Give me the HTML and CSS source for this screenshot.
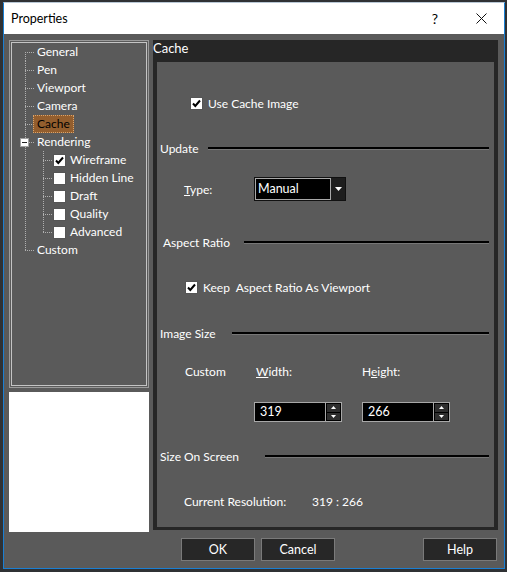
FILE: index.html
```html
<!DOCTYPE html>
<html lang="en">
<head>
  <meta charset="UTF-8" />
  <title>Properties</title>
  <link rel="stylesheet" href="styles.css">
</head>
<body>

  <div class="window">
    <div class="titlebar">
      <span class="title">Properties</span>
      <span class="tb-btn">?</span>
      <span class="tb-btn">
        <svg width="11" height="11" viewBox="0 0 11 11"><path d="M0.5 0.5 L10.5 10.5 M10.5 0.5 L0.5 10.5" stroke="#111" stroke-width="1"/></svg>
      </span>
    </div>

    <div class="main">
      <div class="side">
        <div class="tree-box">
          <ul class="tree">
            <li class="node"><span class="g g-start"></span><span class="label">General</span></li>
            <li class="node"><span class="g g-tee"></span><span class="label">Pen</span></li>
            <li class="node"><span class="g g-tee"></span><span class="label">Viewport</span></li>
            <li class="node"><span class="g g-tee"></span><span class="label">Camera</span></li>
            <li class="node"><span class="g g-tee"></span><span class="label selected">Cache</span></li>
            <li class="node"><span class="g g-tee"><span class="minus"></span></span><span class="label">Rendering</span></li>
            <li class="node"><span class="g g-pipe"></span><span class="g-sub g-tee"></span><span class="check"><svg width="13" height="13" viewBox="0 0 13 13"><path d="M3 6.5 L5.3 9 L10 3.5" fill="none" stroke="#000" stroke-width="2"/></svg></span><span class="label sub">Wireframe</span></li>
            <li class="node"><span class="g g-pipe"></span><span class="g-sub g-tee"></span><span class="check"></span><span class="label sub">Hidden Line</span></li>
            <li class="node"><span class="g g-pipe"></span><span class="g-sub g-tee"></span><span class="check"></span><span class="label sub">Draft</span></li>
            <li class="node"><span class="g g-pipe"></span><span class="g-sub g-tee"></span><span class="check"></span><span class="label sub">Quality</span></li>
            <li class="node"><span class="g g-pipe"></span><span class="g-sub g-end"></span><span class="check"></span><span class="label sub">Advanced</span></li>
            <li class="node"><span class="g g-end"></span><span class="label">Custom</span></li>
          </ul>
        </div>
        <div class="preview"></div>
      </div>

      <div class="panel">
        <div class="panel-title">Cache</div>
        <div class="panel-body">

          <div class="row opt-cache">
            <span class="check"><svg width="13" height="13" viewBox="0 0 13 13"><path d="M3 6.5 L5.3 9 L10 3.5" fill="none" stroke="#000" stroke-width="2"/></svg></span>
            <span class="opt-text">Use Cache Image</span>
          </div>

          <div class="row hdr gap-21">
            <span class="hdr-label w-update">Update</span><span class="rule"></span>
          </div>

          <div class="row gap-17 type-row">
            <span class="field-label"><u>T</u>ype:</span>
            <div class="combo">
              <span class="combo-text">Manual</span>
              <span class="combo-btn"><svg width="7" height="4" viewBox="0 0 7 4"><path d="M0 0 H7 L3.5 4 Z" fill="#fff"/></svg></span>
            </div>
          </div>

          <div class="row hdr hdr-aspect gap-29">
            <span class="hdr-label w-aspect">Aspect Ratio</span><span class="rule"></span>
          </div>

          <div class="row opt-keep gap-21">
            <span class="check"><svg width="13" height="13" viewBox="0 0 13 13"><path d="M3 6.5 L5.3 9 L10 3.5" fill="none" stroke="#000" stroke-width="2"/></svg></span>
            <span class="opt-text">Keep&nbsp; Aspect Ratio As Viewport</span>
          </div>

          <div class="row hdr gap-22">
            <span class="hdr-label w-size">Image Size</span><span class="rule"></span>
          </div>

          <div class="size-grid">
            <span class="custom">Custom</span>
            <span class="dim-label pad-w"><u>W</u>idth:</span>
            <span class="dim-label">H<u>e</u>ight:</span>
            <span></span>
            <div class="spin">
              <span class="spin-text">319</span>
              <span class="spin-btns">
                <span class="spin-btn"><svg width="5" height="3" viewBox="0 0 5 3"><path d="M0 3 H5 L2.5 0 Z" fill="#fff"/></svg></span>
                <span class="spin-btn"><svg width="5" height="3" viewBox="0 0 5 3"><path d="M0 0 H5 L2.5 3 Z" fill="#fff"/></svg></span>
              </span>
            </div>
            <div class="spin">
              <span class="spin-text">266</span>
              <span class="spin-btns">
                <span class="spin-btn"><svg width="5" height="3" viewBox="0 0 5 3"><path d="M0 3 H5 L2.5 0 Z" fill="#fff"/></svg></span>
                <span class="spin-btn"><svg width="5" height="3" viewBox="0 0 5 3"><path d="M0 0 H5 L2.5 3 Z" fill="#fff"/></svg></span>
              </span>
            </div>
          </div>

          <div class="row hdr gap-22">
            <span class="hdr-label w-screen">Size On Screen</span><span class="rule"></span>
          </div>

          <div class="row res-row gap-21">
            <span class="res-label">Current Resolution:</span>
            <span class="res-value">319 : 266</span>
          </div>

        </div>
      </div>
    </div>

    <div class="footer">
      <button class="btn">OK</button>
      <button class="btn">Cancel</button>
      <button class="btn btn-help">Help</button>
    </div>
  </div>

</body>
</html>
```

FILE: styles.css
```css
body {
  margin: 0;
  background: #2f3134;
  font-family: Lato, "Liberation Sans", sans-serif;
  font-size: 12px;
  color: #fff;
}

.window {
  margin: 2px 0 0 3px;
  width: 500px;
  border: 1px solid #1a7fd3;
  border-top-color: #b9c8d6;
  background: #5a5a5a;
}

/* title bar */
.titlebar {
  height: 31px;
  background: #fff;
  color: #000;
  display: flex;
  align-items: center;
}

.title {
  flex: 1;
  padding-left: 7px;
  font-size: 12.5px;
}

.tb-btn {
  width: 46px;
  height: 31px;
  display: flex;
  align-items: center;
  justify-content: center;
  font-size: 14px;
}

/* body */
.main {
  display: flex;
  align-items: flex-start;
  gap: 4px;
  padding: 6px 6px 0 5px;
}

.side {
  width: 140px;
  display: flex;
  flex-direction: column;
  gap: 4px;
}

.tree-box {
  height: 348px;
  box-sizing: border-box;
  border: 1px solid #9a9a9a;
  padding: 1px;
}

.tree {
  list-style: none;
  margin: 0;
  padding: 0;
  height: 100%;
  box-sizing: border-box;
  border: 1px solid #c4c4c4;
}

.node {
  display: flex;
  align-items: center;
  height: 18px;
}

.g, .g-sub {
  flex: none;
  width: 22px;
  height: 18px;
  display: flex;
  align-items: center;
  background-repeat: no-repeat;
}

.g-sub {
  width: 19px;
}

.g-start, .g-tee, .g-end, .g-pipe {
  background-image:
    repeating-linear-gradient(to bottom, #b0b0b0 0 1px, transparent 1px 2px),
    repeating-linear-gradient(to right, #b0b0b0 0 1px, transparent 1px 2px);
}

.g-tee { background-size: 1px 18px, 9px 1px; background-position: 13px 0, 13px 9px; }
.g-end { background-size: 1px 10px, 9px 1px; background-position: 13px 0, 13px 9px; }
.g-start { background-size: 1px 9px, 9px 1px; background-position: 13px 9px, 13px 9px; }
.g-pipe { background-size: 1px 18px, 0 0; background-position: 13px 0, 0 0; }

.g-sub.g-tee { background-size: 1px 18px, 10px 1px; background-position: 9px 0, 9px 9px; }
.g-sub.g-end { background-size: 1px 10px, 10px 1px; background-position: 9px 0, 9px 9px; }

.minus {
  width: 9px;
  height: 9px;
  box-sizing: border-box;
  margin-left: 8px;
  border: 1px solid #a0a0a0;
  background: #fff linear-gradient(#222, #222) no-repeat center / 5px 1px;
}

.label {
  padding: 0 3px;
  line-height: 16px;
  border: 1px solid transparent;
  margin-left: -1px;
  white-space: nowrap;
}

.label.selected {
  background: #935e2e;
  border: 1px dotted #d9a46c;
  color: #000;
}

.label.sub {
  margin-left: 0;
  padding-left: 3px;
}

.check {
  flex: none;
  width: 13px;
  height: 13px;
  box-sizing: border-box;
  background: #fff;
  border: 1px solid #555;
  display: flex;
}

.check svg {
  margin: -1px;
}

.preview {
  height: 140px;
  background: #fff;
}

/* right panel */
.panel {
  width: 345px;
  height: 490px;
  background: #262626;
  display: flex;
  flex-direction: column;
}

.panel-title {
  height: 22px;
  line-height: 16px;
  font-size: 13px;
}

.panel-body {
  flex: 1;
  margin: 0 4px 3px;
  background: #5a5a5a;
  padding-top: 29px;
  display: flex;
  flex-direction: column;
}

.row {
  display: flex;
  align-items: center;
  height: 24px;
  flex: none;
}

.gap-17 { margin-top: 17px; }
.gap-21 { margin-top: 21px; }
.gap-22 { margin-top: 22px; }
.gap-29 { margin-top: 29px; }

.opt-cache { padding-left: 33px; }
.opt-keep { padding-left: 28px; }

.opt-text {
  margin-left: 5px;
}

.hdr {
  padding-left: 3px;
  padding-right: 5px;
}

.hdr-aspect { padding-left: 6px; }

.hdr-label { flex: none; }
.w-update { width: 48px; }
.w-aspect { width: 81px; }
.w-size { width: 72px; }
.w-screen { width: 105px; }

.rule {
  flex: 1;
  height: 0;
  border-top: 2px solid #000;
  border-bottom: 1px solid #777;
}

.type-row {
  padding-left: 27px;
}

.field-label {
  width: 70px;
}

.combo {
  width: 92px;
  height: 24px;
  display: flex;
  box-sizing: border-box;
  border: 1px solid #111;
}

.combo-text {
  flex: 1;
  background: #000;
  border: 1px solid #a8a8a8;
  padding-left: 2px;
  line-height: 20px;
  font-size: 12.5px;
}

.combo-btn {
  width: 14px;
  background: #1e1e1e;
  display: flex;
  align-items: center;
  justify-content: center;
}

.size-grid {
  margin-top: 14px;
  display: grid;
  grid-template-columns: 97px 108px 1fr;
  grid-template-rows: 24px 20px;
  row-gap: 19px;
  align-items: center;
}

.custom {
  padding-left: 28px;
}

.pad-w {
  padding-left: 2px;
}

.spin {
  width: 88px;
  height: 20px;
  box-sizing: border-box;
  border: 1px solid #a8a8a8;
  background: #000;
  display: flex;
}

.spin-text {
  flex: 1;
  padding-left: 5px;
  line-height: 18px;
  font-size: 12.5px;
}

.spin-btns {
  width: 16px;
  display: flex;
  flex-direction: column;
  gap: 1px;
  padding: 1px;
  box-sizing: border-box;
  border-left: 1px solid #a8a8a8;
  background: #000;
}

.spin-btn {
  flex: 1;
  background: #2e2e2e;
  display: flex;
  align-items: center;
  justify-content: center;
}

.res-row {
  padding-left: 27px;
}

.res-label {
  width: 128px;
}

/* footer */
.footer {
  display: flex;
  gap: 6px;
  padding: 6px 7px 7px 177px;
}

.btn {
  width: 74px;
  height: 23px;
  padding: 0;
  background: #272727;
  border: 1px solid #7a7a7a;
  color: #fff;
  font-family: Lato, "Liberation Sans", sans-serif;
  font-size: 12.5px;
}

.btn-help {
  margin-left: auto;
}
```
